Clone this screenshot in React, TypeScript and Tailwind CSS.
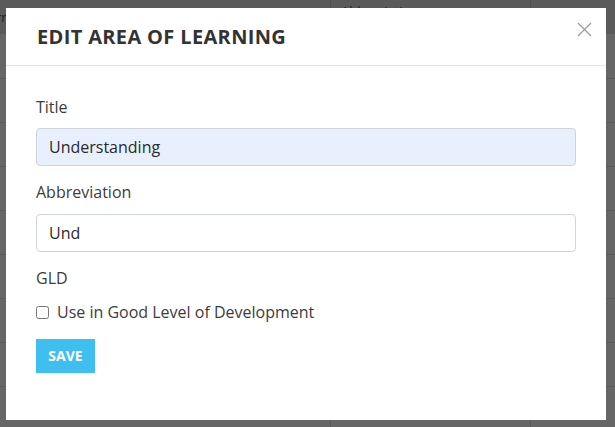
const rows = [0, 1, 2, 3, 4, 5, 6, 7, 8];

const Backdrop = () => (
	<div className="w-full h-full bg-[#666666]">
		<div className="flex h-[34px] bg-[#5a5a5a] text-[13px] text-[#222]">
			<div className="w-[331px] border-r border-[#4f4f4f] pt-[8px]">
				<span className="-ml-[4px]">rn</span>
			</div>
			<div className="w-[200px] border-r border-[#4f4f4f] pl-[10px] pt-[2px]">
				Abbreviation
			</div>
			<div className="flex-1" />
		</div>
		<div className="h-[45px] border-b border-[#5a5a5a]" />
		{rows.map((r) => (
			<div key={r} className="flex h-[44px] border-b border-[#5a5a5a]">
				<div className="w-[331px] border-r border-[#5a5a5a]" />
				<div className="w-[200px] border-r border-[#5a5a5a]" />
				<div className="flex-1" />
			</div>
		))}
	</div>
);

const CloseIcon = () => (
	<svg width="15" height="15" viewBox="0 0 15 15" className="text-[#9a9a9a]">
		<path d="M1 1 L14 14 M14 1 L1 14" stroke="currentColor" strokeWidth="1.2" />
	</svg>
);

export default function App() {
	return (
		<div
			className="relative w-[615px] h-[427px] overflow-hidden"
			style={{ fontFamily: '"Open Sans", "Noto Sans", sans-serif' }}
		>
			<Backdrop />

			<div className="absolute left-[6px] top-[8px] w-[600px] h-[412px] bg-white flex flex-col">
				<div className="relative h-[58px] flex items-center px-[31px] border-b border-[#e5e5e5]">
					<h2 className="text-[20px] font-bold text-[#333] tracking-[0.35px]">
						EDIT AREA OF LEARNING
					</h2>
					<button className="absolute right-[14px] top-[14px] p-0">
						<CloseIcon />
					</button>
				</div>

				<div className="flex flex-col px-[30px] pt-[29px] text-[16px] leading-[24px] text-[#3c3c3c]">
					<label>Title</label>
					<div className="mt-[9px] h-[38px] flex items-center px-[12px] bg-[#e8f0fe] border border-[#cfd4dc] rounded-[4px] text-[#2a2a2a]">
						Understanding
					</div>

					<label className="mt-[14px]">Abbreviation</label>
					<div className="mt-[10px] h-[38px] flex items-center px-[12px] bg-white border border-[#cfd4dc] rounded-[4px] text-[#2a2a2a]">
						Und
					</div>

					<label className="mt-[14px]">GLD</label>
					<div className="mt-[10px] flex items-center gap-[8px]">
						<input type="checkbox" className="w-[13px] h-[13px] m-0" />
						<span>Use in Good Level of Development</span>
					</div>

					<div className="mt-[15px]">
						<button className="h-[34px] w-[59px] bg-[#3fbff0] text-white text-[14px] font-bold">
							SAVE
						</button>
					</div>
				</div>
			</div>
		</div>
	);
}
